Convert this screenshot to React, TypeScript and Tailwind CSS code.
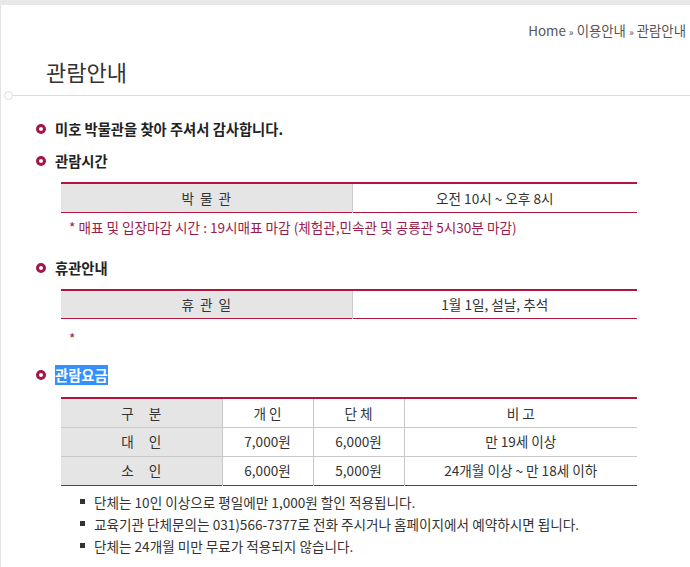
export default function App() {
  const heading = 'flex items-center gap-[9px] h-[20px] text-[14.3px] leading-[20px] font-bold text-[#222]';
  const ring = 'w-[10px] h-[10px] rounded-full border-[3px] border-[#a3164a] shrink-0';
  const th = 'h-[29px] p-0 text-center text-[13.6px] text-[#333] font-normal';

  return (
    <div
      className="min-h-[567px] bg-white border-t-[5px] border-[#e8e8e8]"
      style={{ fontFamily: '"Noto Sans CJK KR", "Noto Sans", sans-serif' }}
    >
      <div className="min-h-[562px] border-l border-[#e3e3e3]">
        <div className="pt-[16px] pr-[4px] text-right text-[13.4px] leading-[18px] text-[#555]">
          Home <span className="text-[10px]">»</span> 이용안내 <span className="text-[10px]">»</span> 관람안내
        </div>

        <h1 className="mt-[15px] pl-[45px] text-[22px] leading-[30px] font-normal text-[#333]">관람안내</h1>

        <div className="mt-[5px] flex items-center h-[9px] pl-[3px]">
          <span className="w-[9px] h-[9px] rounded-full border border-[#dcdcdc] shrink-0" />
          <span className="flex-1 h-px bg-[#dcdcdc]" />
        </div>

        <div className="pl-[35px] pr-[53px]">
          <div className={`${heading} mt-[19px]`}>
            <span className={ring} />
            <span>미호 박물관을 찾아 주셔서 감사합니다.</span>
          </div>

          <div className={`${heading} mt-[12px]`}>
            <span className={ring} />
            <span>관람시간</span>
          </div>

          <table className="mt-[11px] ml-[25px] w-[576px] border-collapse border-t-2 border-b border-[#b0153c]">
            <tbody>
              <tr>
                <td className={`${th} w-[291px] bg-[#e5e5e5] border-r border-[#cccccc] [word-spacing:3px]`}>박 물 관</td>
                <td className={th}>오전 10시 ~ 오후 8시</td>
              </tr>
            </tbody>
          </table>

          <p className="mt-[4px] pl-[33px] text-[13.6px] leading-[20px] text-[#9b1b4a]">
            * 매표 및 입장마감 시간 : 19시매표 마감 (체험관,민속관 및 공룡관 5시30분 마감)
          </p>

          <div className={`${heading} mt-[21px]`}>
            <span className={ring} />
            <span>휴관안내</span>
          </div>

          <table className="mt-[11px] ml-[25px] w-[576px] border-collapse border-t-2 border-b border-[#b0153c]">
            <tbody>
              <tr>
                <td className={`${th} w-[291px] bg-[#e5e5e5] border-r border-[#cccccc] [word-spacing:3px]`}>휴 관 일</td>
                <td className={th}>1월 1일, 설날, 추석</td>
              </tr>
            </tbody>
          </table>

          <p className="mt-[9px] pl-[33px] text-[13.6px] leading-[20px] text-[#9b1b4a]">*</p>

          <div className={`${heading} mt-[17px]`}>
            <span className={ring} />
            <span className="bg-[#3390ff] text-white">관람요금</span>
          </div>

          <table className="mt-[12px] ml-[25px] w-[576px] border-collapse border-t-2 border-b border-[#b0153c]">
            <tbody>
              <tr className="border-b border-[#c8c8c8]">
                <td className={`${th} w-[161px] bg-[#e5e5e5] border-r border-[#c8c8c8]`}>
                  <span className="inline-flex gap-[15px]"><span>구</span><span>분</span></span>
                </td>
                <td className={`${th} w-[91px] border-r border-[#c8c8c8]`}>개 인</td>
                <td className={`${th} w-[91px] border-r border-[#c8c8c8]`}>단 체</td>
                <td className={th}>비 고</td>
              </tr>
              <tr className="border-b border-[#c8c8c8]">
                <td className={`${th} bg-[#e5e5e5] border-r border-[#c8c8c8]`}>
                  <span className="inline-flex gap-[15px]"><span>대</span><span>인</span></span>
                </td>
                <td className={`${th} border-r border-[#c8c8c8]`}>7,000원</td>
                <td className={`${th} border-r border-[#c8c8c8]`}>6,000원</td>
                <td className={th}>만 19세 이상</td>
              </tr>
              <tr>
                <td className={`${th} bg-[#e5e5e5] border-r border-[#c8c8c8]`}>
                  <span className="inline-flex gap-[15px]"><span>소</span><span>인</span></span>
                </td>
                <td className={`${th} border-r border-[#c8c8c8]`}>6,000원</td>
                <td className={`${th} border-r border-[#c8c8c8]`}>5,000원</td>
                <td className={th}>24개월 이상 ~ 만 18세 이하</td>
              </tr>
            </tbody>
          </table>

          <ul className="mt-[5px] pl-[44px] text-[13.6px] leading-[22px] text-[#333]">
            {[
              '단체는 10인 이상으로 평일에만 1,000원 할인 적용됩니다.',
              '교육기관 단체문의는 031)566-7377로 전화 주시거나 홈페이지에서 예약하시면 됩니다.',
              '단체는 24개월 미만 무료가 적용되지 않습니다.',
            ].map((t) => (
              <li key={t} className="flex items-center gap-[9px]">
                <span className="w-[5px] h-[5px] bg-[#333] shrink-0" />
                <span>{t}</span>
              </li>
            ))}
          </ul>
        </div>
      </div>
    </div>
  );
}
